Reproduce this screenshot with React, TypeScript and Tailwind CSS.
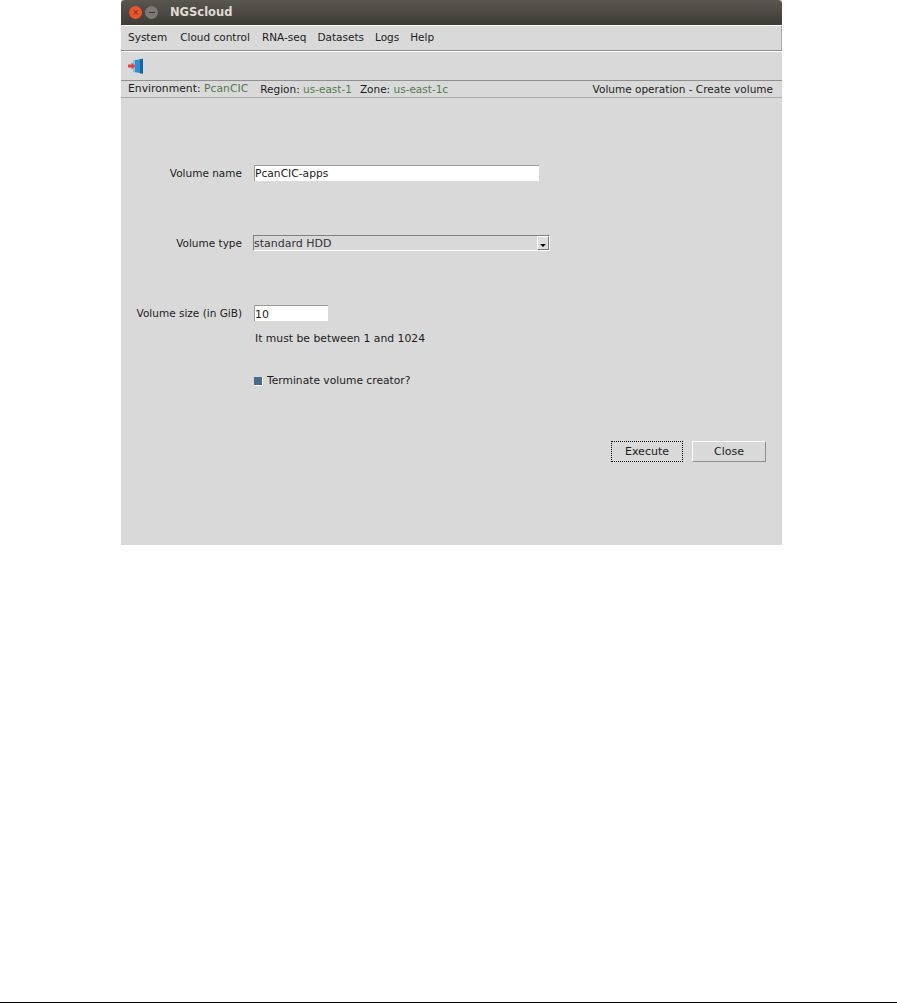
const green = "text-[#55784f]";

const Field = ({ label, top, children }: { label: string; top: string; children: React.ReactNode }) => (
  <div className={`flex items-center ${top}`}>
    <div className="w-[121px] whitespace-nowrap text-right text-[10.5px]">{label}</div>
    <div className="ml-[12px]">{children}</div>
  </div>
);

function DoorIcon() {
  return (
    <svg width="16" height="16" viewBox="0 0 16 16">
      <path d="M5.5 2.5 15 .5v15l-9.5-1.5z" fill="#2f8fd6" />
      <path d="M12 1h3v14.500h-3z" fill="#0f66a8" />
      <path d="M5.500 2.500H7v11.500H5.500z" fill="#7cc4ee" />
      <path d="M0 6.500h3.500V4.500l4 3.500-4 3.500V9.500H0z" fill="#e8403a" />
    </svg>
  );
}

export default function App() {
  return (
    <div className="relative h-[1003px] w-[897px] overflow-hidden bg-white font-['DejaVu_Sans',sans-serif] text-[10.5px] leading-none text-[#1c1c1c]">
      <div className="ml-[121px] flex h-[545px] w-[661px] flex-col bg-[#d9d9d9]">
        {/* title bar */}
        <div className="flex h-[25px] items-center rounded-t-[4px] bg-gradient-to-b from-[#5a5750] to-[#3e3c37] pl-[8px]">
          <div className="flex h-[13px] w-[13px] items-center justify-center rounded-full bg-[#e9552c] text-[8px] text-[#7a2a12]">×</div>
          <div className="ml-[3px] flex h-[13px] w-[13px] items-center justify-center rounded-full bg-[#7a7975]">
            <div className="h-px w-[6px] bg-[#3a3835]" />
          </div>
          <div className="ml-[12px] pt-px text-[11.5px] font-bold text-[#dfdbd2]">NGScloud</div>
        </div>
        <div className="h-px bg-white" />
        {/* menu */}
        <div className="flex h-[24px] items-center border-r border-[#a8a8a8] pb-[2px] pl-[7px]">
          <span>System</span>
          <span className="ml-[13px]">Cloud control</span>
          <span className="ml-[12px]">RNA-seq</span>
          <span className="ml-[11px]">Datasets</span>
          <span className="ml-[11px]">Logs</span>
          <span className="ml-[11px]">Help</span>
        </div>
        <div className="h-px bg-[#8f8f8f]" />
        <div className="h-px bg-white" />
        {/* toolbar */}
        <div className="flex h-[28px] items-center pl-[7px]">
          <DoorIcon />
        </div>
        <div className="h-px bg-[#8f8f8f]" />
        {/* status */}
        <div className="flex h-[16px] items-center justify-between pl-[7px] pr-[9px]">
          <div className="flex items-center pt-px">
            <span className="text-[10.8px]">Environment: <span className={green}>PcanCIC</span></span>
            <span className="ml-[12px]">Region: <span className={green}>us-east-1</span></span>
            <span className="ml-[8px]">Zone: <span className={green}>us-east-1c</span></span>
          </div>
          <span>Volume operation - Create volume</span>
        </div>
        <div className="h-px bg-[#ababab]" />
        {/* form */}
        <div className="flex flex-1 flex-col">
          <Field label="Volume name" top="mt-[67px]">
            <div className="flex h-[16px] w-[285px] items-center border-t border-l border-[#9a9a9a] bg-white pt-px text-[10.7px]">PcanCIC-apps</div>
          </Field>
          <Field label="Volume type" top="mt-[54px]">
            <div className="ml-[-1px] flex h-[16px] w-[297px] items-center justify-between border-t border-l border-[#808080] border-b-white border-b border-r-white border-r text-[11px]">
              <span className="text-[#333]">standard HDD</span>
              <div className="flex h-[14px] w-[12px] items-center justify-center border-t border-l border-t-white border-l-white border-r border-b border-r-[#777] border-b-[#777] bg-[#dedede]">
                <div className="mt-[5px] h-0 w-0 border-x-[3.5px] border-t-[3px] border-x-transparent border-t-black" />
              </div>
            </div>
          </Field>
          <Field label="Volume size (in GiB)" top="mt-[54px]">
            <div className="flex h-[16px] w-[74px] items-center border-t border-l border-[#9a9a9a] bg-white pt-px text-[11px]">10</div>
          </Field>
          <div className="ml-[134px] mt-[13px] text-[10.8px]">It must be between 1 and 1024</div>
          <div className="ml-[133px] mt-[31px] flex items-center">
            <div className="h-[9px] w-[9px] border-r border-b border-white bg-[#4a6a8a]" />
            <span className="ml-[4px] text-[10.7px]">Terminate volume creator?</span>
          </div>
          <div className="mt-[54px] flex justify-end gap-[9px] pr-[16px] text-[11px]">
            <button className="flex h-[21px] w-[72px] items-center justify-center border border-dotted border-black">Execute</button>
            <button className="flex h-[21px] w-[74px] items-center justify-center border border-t-white border-l-white border-b-[#8f8f8f] border-r-[#8f8f8f]">Close</button>
          </div>
        </div>
      </div>
      <div className="absolute left-0 right-0 top-[1002px] h-px bg-black" />
    </div>
  );
}
